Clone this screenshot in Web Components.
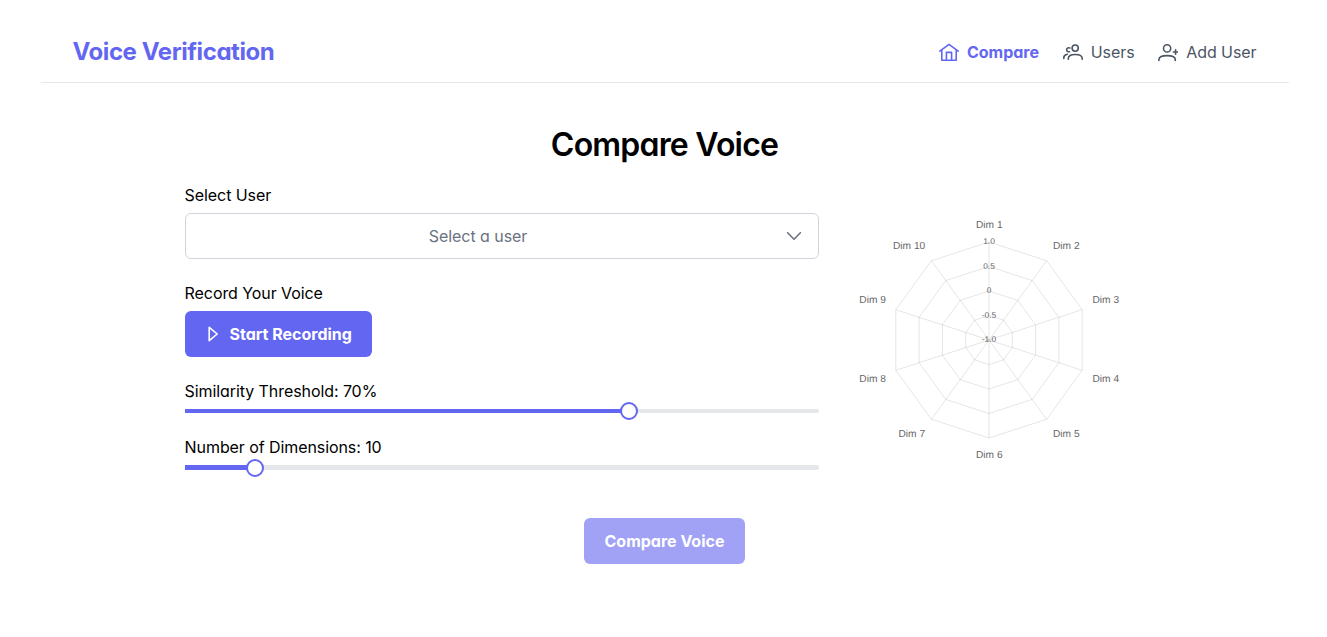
<!DOCTYPE html>
<html lang="en">
<head>
<meta charset="utf-8">
<title>Voice Verification</title>
<style>
body{margin:0;background:#fff;color:#000;font:16px/24px Inter,"Liberation Sans",sans-serif;font-feature-settings:"cv02","cv03","cv04","cv11"}
</style>
</head>
<body>
<voice-app></voice-app>
<script>
function define(name, html, setup) {
  customElements.define(name, class extends HTMLElement {
    constructor() { super(); this.attachShadow({ mode: 'open' }); }
    connectedCallback() {
      this.shadowRoot.innerHTML = html;
      if (setup) setup(this, this.shadowRoot);
    }
  });
}

const icons = {
  home: ['0 0 20 20', '<path d="M.8 9.2 10 2.3l9.2 6.9M2.8 8v10.3h14.4V8M7.4 18V10.4h5.2V18"/>'],
  users: ['0 0 20 20', '<circle cx="12.2" cy="6.1" r="3.1"/><path d="M5.3 17.2v-.7c0-2.7 2.4-4 7-4s6.9 1.3 6.9 4v.7M6.9 5.9C4.8 5.2 3.6 6.4 3.6 7.7s1.2 2.4 2.9 2M.8 16.4v-.7c0-1.9 1.1-3 3.5-3.4"/>'],
  plus: ['0 0 20 20', '<circle cx="9.1" cy="6.4" r="3.6"/><path d="M.9 18.4v-.9c0-2.6 2.6-3.9 8.2-3.9s8.2 1.3 8.2 3.9v.9M17.6 7.8v4.5M15.4 10h4.4"/>'],
  play: ['0 0 16 16', '<path d="M4.2 1.3v13.4L12.2 8z"/>'],
  down: ['0 0 16 16', '<path d="M1.6 4.7 8 11.2l6.4-6.5"/>']
};
define('ui-icon', `<style>:host{display:block;flex:none}svg{display:block;width:100%;height:100%;fill:none;stroke:currentColor;stroke-width:1.6;stroke-linecap:round;stroke-linejoin:round}</style><svg></svg>`, (el, root) => {
  const [box, shape] = icons[el.getAttribute('name')];
  const svg = root.querySelector('svg');
  svg.setAttribute('viewBox', box);
  svg.innerHTML = shape;
});

define('nav-link', `<style>:host{display:flex;align-items:center;gap:8px;color:#4b5563;white-space:nowrap;letter-spacing:-.08px}:host([active]){color:#6366f1;font-weight:700;letter-spacing:0}ui-icon{width:20px;height:20px}</style><slot></slot>`, (el, root) => {
  const icon = document.createElement('ui-icon');
  icon.setAttribute('name', el.getAttribute('icon'));
  root.querySelector('slot').before(icon);
});

define('app-header', `<style>
:host{display:flex;align-items:center;justify-content:space-between;box-sizing:border-box;height:63px;margin:20px 38px 0 41px;padding:0 32.5px 0 31.5px;border-bottom:1px solid #e5e7eb}
h1{margin:0;font-size:24px;line-height:29px;font-weight:650;letter-spacing:-.42px;color:#6366f1}
nav{display:flex;gap:23.8px;margin-top:2px}
</style><h1>Voice Verification</h1><nav><nav-link icon="home" active>Compare</nav-link><nav-link icon="users">Users</nav-link><nav-link icon="plus">Add User</nav-link></nav>`);

define('form-field', `<style>:host{display:block}.label{height:24px;line-height:24px;margin-bottom:var(--field-gap,6px);letter-spacing:-.08px;text-indent:-.4px}</style><div class="label"></div><slot></slot>`, (el, root) => {
  root.querySelector('.label').textContent = el.getAttribute('label');
});

define('user-select', `<style>
:host{display:flex;box-sizing:border-box;height:46px;border:1px solid #d1d5db;border-radius:6px;color:#6b7280;align-items:center}
span{flex:1;text-align:center;letter-spacing:-.05px}.trigger{width:48px;display:flex;justify-content:center}ui-icon{width:16px;height:16px}
</style><span>Select a user</span><div class="trigger"><ui-icon name="down"></ui-icon></div>`);

define('ui-button', `<style>
:host{display:flex;box-sizing:border-box;width:max-content;height:46px;padding:0 21px;border-radius:6px;background:#6366f1;color:#fff;font-weight:700;align-items:center;gap:8px}
:host([disabled]){opacity:.6}
</style><slot></slot>`);

define('range-slider', `<style>
:host{display:block;position:relative;height:var(--track,4px);background:#e5e7eb;border-radius:0 4px 4px 0}
.fill{height:100%;background:#6366f1}
.thumb{position:absolute;box-sizing:border-box;width:18px;height:18px;top:50%;transform:translate(-50%,-50%);border:2px solid #6366f1;border-radius:50%;background:#fff}
</style><div class="fill"></div><div class="thumb"></div>`, (el, root) => {
  const value = el.getAttribute('value') + '%';
  root.querySelector('.fill').style.width = value;
  root.querySelector('.thumb').style.left = value;
});

define('radar-chart', `<style>:host{display:block}svg{display:block;width:309px;height:270px;overflow:visible}text{font-family:"Liberation Sans",Arial,sans-serif;font-feature-settings:normal;fill:#666;font-size:10.2px;text-rendering:geometricPrecision}.tick{font-size:8.4px;text-anchor:middle}</style><svg viewBox="835 205 309 270"></svg>`, (el, root) => {
  const cx = 989, cy = 340, radius = 98;
  const point = (i, r) => [cx + r * Math.sin(i * Math.PI / 5), cy - r * Math.cos(i * Math.PI / 5)].map(v => v.toFixed(2)).join(' ');
  let out = '<g fill="none" stroke="#000" stroke-opacity=".1">';
  for (let n = 1; n < 5; n++) out += `<path d="M${Array.from({ length: 10 }, (_, i) => point(i, radius * n / 4)).join('L')}Z"/>`;
  for (let i = 0; i < 10; i++) out += `<path d="M${cx} ${cy}L${point(i, radius)}"/>`;
  out += '</g>';
  const labels = [[976, 228], [1053, 249], [1092.5, 303], [1092.5, 382], [1053, 437], [976, 458], [898.5, 437], [859.3, 382], [859.3, 303], [893, 249]];
  labels.forEach(([x, y], i) => { out += `<text x="${x}" y="${y}">Dim ${i + 1}</text>`; });
  ['1.0', '0.5', '0', '-0.5', '-1.0'].forEach((t, i) => { out += `<text class="tick" x="989" y="${[244, 269, 293, 318, 342][i]}">${t}</text>`; });
  root.querySelector('svg').innerHTML = out;
});

define('compare-page', `<style>
:host{display:block;width:959px;margin:42px auto 0 185px}
h2{margin:0;font-size:32px;line-height:40px;font-weight:600;letter-spacing:-.8px;text-align:center}
.grid{display:grid;grid-template-columns:634px 309px;gap:16px;margin-top:18px}
.form{display:flex;flex-direction:column}
form-field + form-field{margin-top:22px}
.play{width:16px;height:16px;margin-left:-.5px;margin-right:.5px}
.start{padding-left:20.5px;padding-right:20.5px}
.dims{--track:5px}
radar-chart{margin-top:22px}
.submit{margin:43px auto 0}
</style>
<h2>Compare Voice</h2>
<div class="grid"><div class="form">
<form-field label="Select User"><user-select></user-select></form-field>
<form-field label="Record Your Voice"><ui-button class="start"><ui-icon class="play" name="play"></ui-icon>Start Recording</ui-button></form-field>
<form-field label="Similarity Threshold: 70%"><range-slider value="70"></range-slider></form-field>
<form-field class="dims" label="Number of Dimensions: 10"><range-slider value="11.1"></range-slider></form-field>
</div><radar-chart></radar-chart></div>
<ui-button class="submit" disabled>Compare Voice</ui-button>`);

define('voice-app', `<style>:host{display:flow-root}</style><app-header></app-header><compare-page></compare-page>`);
</script>
</body>
</html>
